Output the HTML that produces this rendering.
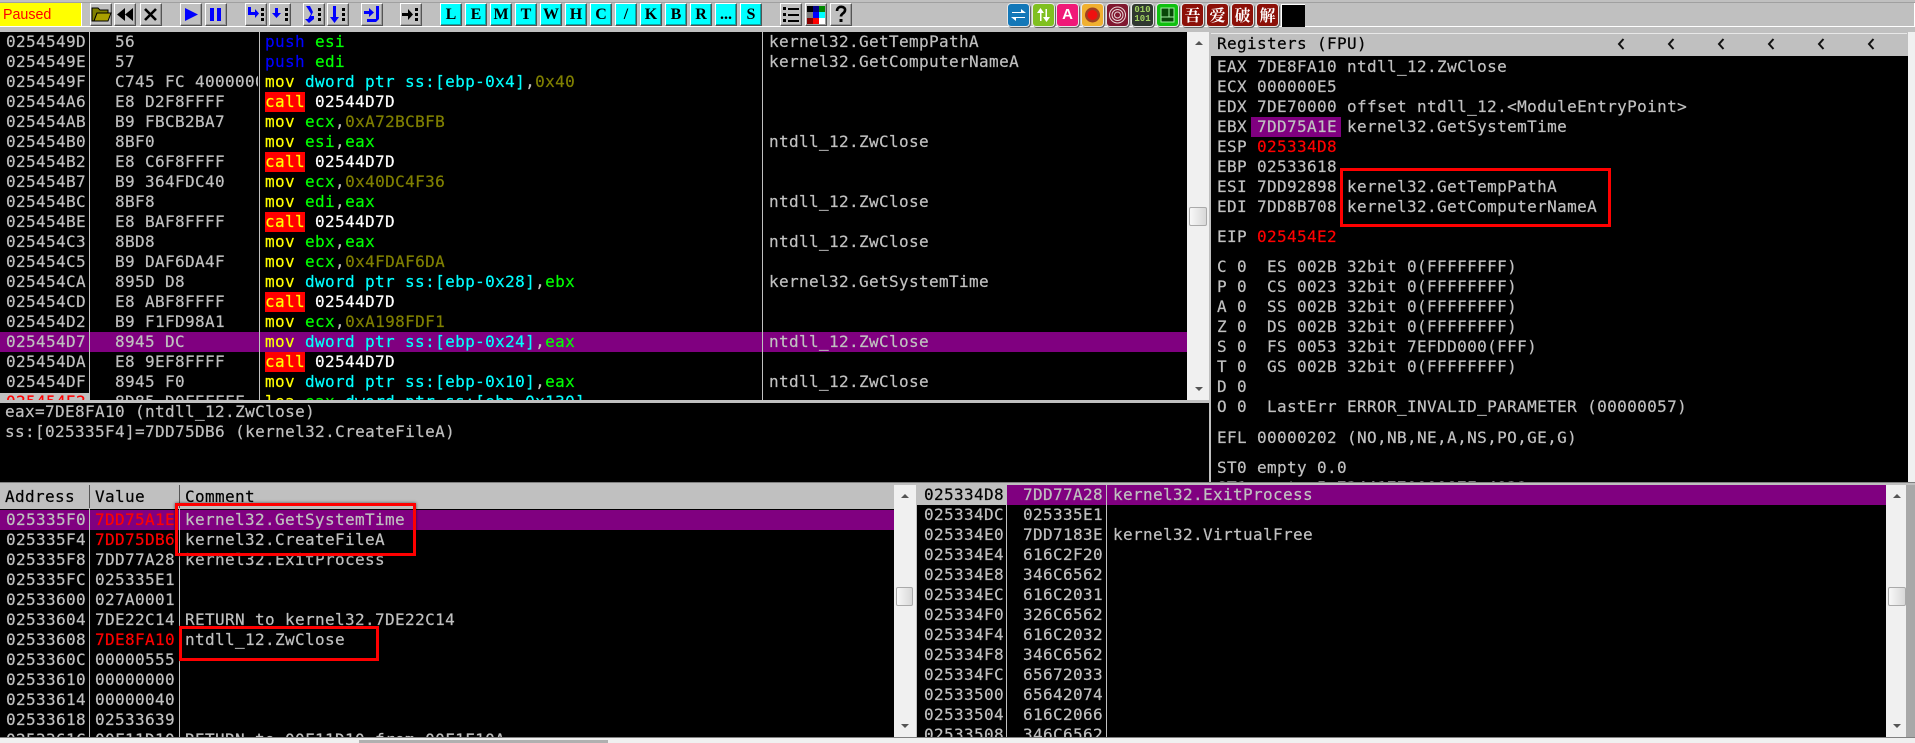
<!DOCTYPE html>
<html><head><meta charset="utf-8"><title>OllyDbg</title>
<style>
html,body{margin:0;padding:0;background:#c0c0c0}
#r{position:relative;width:1915px;height:743px;overflow:hidden;background:#c0c0c0;font-family:"DejaVu Sans Mono","Liberation Mono",monospace;filter:blur(.35px)}
.a{position:absolute}
pre{position:absolute;margin:0;font:16px/20px "DejaVu Sans Mono","Liberation Mono",monospace;letter-spacing:.37px;color:#c0c0c0;white-space:pre;-webkit-text-stroke:.2px}
.k{position:absolute;background:#000;overflow:hidden}
.b{position:absolute;top:3px;width:22px;height:23px;box-sizing:border-box;background:#c0c0c0;border:1px solid;border-color:#fff #555 #555 #fff;box-shadow:inset -1px -1px 0 #999}
.b svg{position:absolute;left:-1px;top:-1px;width:22px;height:23px}
.c{background:#0ff;text-align:center;font:bold 16px/21px "Liberation Serif",serif;color:#000;box-shadow:inset -1px -1px 0 #0aa}
.h{position:absolute;top:4px;width:21px;height:22px;border-radius:3px;box-shadow:0 0 0 1px #e8e8e8,1px 1px 0 1px #666;text-align:center;color:#fff}
.z{background:#8c1008;font:bold 16px/21px "Noto Serif CJK SC","Noto Sans CJK SC",serif}
.y{color:#ff0}.g{color:#0f0}.u{color:#00f}.n{color:#0ff}.o{color:#808000}.w{color:#fff}
.r{display:inline-block;background:#f00;color:#ff0;height:20px}
.e{color:#f00}
.p{position:absolute;background:#800080}
.v{position:absolute;width:1px;background:#c0c0c0}
.s{position:absolute;background:#f0f0f0}
.t{position:absolute;box-sizing:border-box;background:linear-gradient(90deg,#f8f8f8,#d8d8d8);border:1px solid #aaa;border-radius:2px;height:19px}
.f{position:absolute;width:0;height:0;border-left:4px solid transparent;border-right:4px solid transparent}
.x{position:absolute;box-sizing:border-box;border:3px solid #f00;box-shadow:0 0 3px rgba(0,0,0,.6)}
.q{position:absolute;top:38px;width:8px;height:12px}
</style></head><body><div id="r">

<!-- toolbar -->
<div class="a" style="left:0;top:2px;width:1915px;height:1px;background:#a0a0a0"></div>
<div class="a" style="left:0;top:26px;width:1915px;height:1px;background:#fff"></div>
<div class="a" style="left:0;top:3px;width:81px;height:23px;background:#ff0;border-right:1px solid #fff;color:#f00;font:15px/23px 'Liberation Sans',sans-serif"><span style="position:absolute;left:3px;top:0;transform:scaleX(.95);transform-origin:left">Paused</span></div>
<div class="a" style="left:1914px;top:3px;width:1px;height:24px;background:#fff"></div>

<div class="b" style="left:90px"><svg viewBox="0 0 22 23"><path d="M2 5h6l2 2h8v3H7L4 18H2z" fill="#808000" stroke="#000"/><path d="M7 10h14l-3 8H4z" fill="#aaa000" stroke="#000"/></svg></div>
<div class="b" style="left:114px"><svg viewBox="0 0 22 23"><path d="M11 5v13L3 11.500zM19 5v13l-8-6.500z" fill="#000"/></svg></div>
<div class="b" style="left:140px"><svg viewBox="0 0 22 23"><path d="M5 6l11 11M16 6L5 17" stroke="#000" stroke-width="2.600" fill="none"/></svg></div>
<div class="b" style="left:180px"><svg viewBox="0 0 22 23"><path d="M5 5l13 6.500L5 18z" fill="#00f"/></svg></div>
<div class="b" style="left:205px"><svg viewBox="0 0 22 23"><path d="M5 5h4v13H5zM12 5h4v13h-4z" fill="#00f"/></svg></div>
<div class="b" style="left:245px"><svg viewBox="0 0 22 23"><path d="M3 4h3v5h4V6l4 4.500-4 4.500v-3H3z" fill="#00f"/><path d="M16 5h3v3h-3zM16 10h3v3h-3zM16 15h3v3h-3z" fill="#000"/></svg></div>
<div class="b" style="left:269px"><svg viewBox="0 0 22 23"><path d="M6 5h3v5h3l-4.500 5L3 10h3z" fill="#00f"/><path d="M16 5h3v3h-3zM16 10h3v3h-3zM16 15h3v3h-3z" fill="#000"/></svg></div>
<div class="b" style="left:303px"><svg viewBox="0 0 22 23"><path d="M3 3l4 0 3 6-2 4h3v3l-5 4-4-4h3l3-5-3-5z" fill="#00f"/><path d="M15 5h3v3h-3zM15 10h3v3h-3zM15 15h3v3h-3z" fill="#000"/></svg></div>
<div class="b" style="left:327px"><svg viewBox="0 0 22 23"><path d="M6 3h3v11h3l-4.500 6L3 14h3z" fill="#00f"/><path d="M15 5h3v3h-3zM15 10h3v3h-3zM15 15h3v3h-3z" fill="#000"/></svg></div>
<div class="b" style="left:361px"><svg viewBox="0 0 22 23"><path d="M3 8h5V5l5 4.500L8 14v-3H3z" fill="#00f"/><path d="M15 3h3v13l-3 3H6v-3h9z" fill="#00f"/></svg></div>
<div class="b" style="left:400px"><svg viewBox="0 0 22 23"><path d="M2 10h6V6l5 5.500L8 17v-4H2z" fill="#000"/><path d="M15 5h3v3h-3zM15 10h3v3h-3zM15 15h3v3h-3z" fill="#000"/></svg></div>

<div class="b c" style="left:440px">L</div><div class="b c" style="left:465px">E</div><div class="b c" style="left:490px">M</div><div class="b c" style="left:515px">T</div><div class="b c" style="left:540px">W</div><div class="b c" style="left:565px">H</div><div class="b c" style="left:590px">C</div><div class="b c" style="left:615px">/</div><div class="b c" style="left:640px">K</div><div class="b c" style="left:665px">B</div><div class="b c" style="left:690px">R</div><div class="b c" style="left:715px">...</div><div class="b c" style="left:740px">S</div>

<div class="b" style="left:780px"><svg viewBox="0 0 22 23"><path d="M3 4h3v3H3zM3 10h3v3H3zM3 16h3v3H3z" fill="#000"/><path d="M8 5h11v2H8zM8 11h11v2H8zM8 17h11v2H8z" fill="#000"/></svg></div>
<div class="b" style="left:805px"><svg viewBox="0 0 22 23"><rect x="2" y="3" width="6" height="6" fill="#000"/><rect x="8" y="3" width="6" height="6" fill="#008"/><rect x="14" y="3" width="6" height="6" fill="#080"/><rect x="2" y="9" width="6" height="6" fill="#808080"/><rect x="8" y="9" width="6" height="6" fill="#00f"/><rect x="14" y="9" width="6" height="6" fill="#0ff"/><rect x="2" y="15" width="6" height="6" fill="#800"/><rect x="8" y="15" width="6" height="6" fill="#f00"/><rect x="14" y="15" width="6" height="6" fill="#fff"/></svg></div>
<div class="b" style="left:830px"><svg viewBox="0 0 22 23"><path d="M7 8c0-6 9-5 8-.500-.500 3-4 3-4 6" stroke="#000" stroke-width="2.600" fill="none"/><rect x="9.500" y="16" width="3" height="3" fill="#000"/></svg></div>

<div class="h" style="left:1008px;background:#1478b8"><svg width="21" height="22" viewBox="0 0 21 22"><path d="M4 8h9V5l5 4h-14zM17 14H8v3l-5-4h14z" fill="#fff"/></svg></div>
<div class="h" style="left:1033px;background:#80c020"><svg width="21" height="22" viewBox="0 0 21 22"><path d="M7 17V9H4l3.500-5L11 9H8.500v8zM14 5v8h3l-3.500 5L10 13h2.500V5z" fill="#fff"/></svg></div>
<div class="h" style="left:1057px;background:#f01878;font:bold 15px/22px 'Liberation Sans',sans-serif">A</div>
<div class="h" style="left:1082px;background:#f0b030"><svg width="21" height="22" viewBox="0 0 21 22"><circle cx="10.500" cy="11" r="7.500" fill="#a04020"/><circle cx="10.500" cy="11" r="5" fill="#f01010"/></svg></div>
<div class="h" style="left:1107px;background:#801830"><svg width="21" height="22" viewBox="0 0 21 22" fill="none" stroke="#e8d8d8"><circle cx="10.500" cy="11" r="8"/><circle cx="10.500" cy="11" r="5.500"/><circle cx="10.500" cy="11" r="3"/></svg></div>
<div class="h" style="left:1132px;background:#303830;color:#a0d060;font:bold 9px/9px 'Liberation Mono',monospace;padding-top:2px;box-sizing:border-box">010<br>101</div>
<div class="h" style="left:1157px;background:#10c010"><svg width="21" height="22" viewBox="0 0 21 22"><rect x="4" y="4" width="13" height="14" fill="#084808" stroke="#a0f0a0"/><path d="M12 4v9M4 13h13" stroke="#a0f0a0"/></svg></div>
<div class="h z" style="left:1182px">吾</div><div class="h z" style="left:1207px">爱</div><div class="h z" style="left:1232px">破</div><div class="h z" style="left:1257px">解</div>
<div class="a" style="left:1281px;top:4px;width:23px;height:22px;background:#000;border-left:1px solid #fff;border-top:1px solid #fff"></div>

<!-- disassembly -->
<div class="k" style="left:0;top:32px;width:1187px;height:368px">
<div class="a" style="left:0;top:361px;width:89px;height:7px;background:#c0c0c0"></div>
<div class="p" style="left:0;top:300px;width:1187px;height:20px"></div>
<pre style="left:6px;top:0">0254549D
0254549E
0254549F
025454A6
025454AB
025454B0
025454B2
025454B7
025454BC
025454BE
025454C3
025454C5
025454CA
025454CD
025454D2
025454D7
025454DA
025454DF
<span class="e">025454E2</span></pre>
<pre style="left:115px;top:0;width:143px;overflow:hidden">56
57
C745 FC 40000000
E8 D2F8FFFF
B9 FBCB2BA7
8BF0
E8 C6F8FFFF
B9 364FDC40
8BF8
E8 BAF8FFFF
8BD8
B9 DAF6DA4F
895D D8
E8 ABF8FFFF
B9 F1FD98A1
8945 DC
E8 9EF8FFFF
8945 F0
8D85 D0FEFFFF</pre>
<pre style="left:265px;top:0"><span class="u">push</span> <span class="g">esi</span>
<span class="u">push</span> <span class="g">edi</span>
<span class="y">mov</span> <span class="n">dword ptr ss:[ebp-0x4]</span>,<span class="o">0x40</span>
<span class="r">call</span> <span class="w">02544D7D</span>
<span class="y">mov</span> <span class="g">ecx</span>,<span class="o">0xA72BCBFB</span>
<span class="y">mov</span> <span class="g">esi</span>,<span class="g">eax</span>
<span class="r">call</span> <span class="w">02544D7D</span>
<span class="y">mov</span> <span class="g">ecx</span>,<span class="o">0x40DC4F36</span>
<span class="y">mov</span> <span class="g">edi</span>,<span class="g">eax</span>
<span class="r">call</span> <span class="w">02544D7D</span>
<span class="y">mov</span> <span class="g">ebx</span>,<span class="g">eax</span>
<span class="y">mov</span> <span class="g">ecx</span>,<span class="o">0x4FDAF6DA</span>
<span class="y">mov</span> <span class="n">dword ptr ss:[ebp-0x28]</span>,<span class="g">ebx</span>
<span class="r">call</span> <span class="w">02544D7D</span>
<span class="y">mov</span> <span class="g">ecx</span>,<span class="o">0xA198FDF1</span>
<span class="y">mov</span> <span class="n">dword ptr ss:[ebp-0x24]</span>,<span class="g">eax</span>
<span class="r">call</span> <span class="w">02544D7D</span>
<span class="y">mov</span> <span class="n">dword ptr ss:[ebp-0x10]</span>,<span class="g">eax</span>
<span class="y">lea</span> <span class="g">eax</span>,<span class="n">dword ptr ss:[ebp-0x130]</span></pre>
<pre style="left:769px;top:0">kernel32.GetTempPathA
kernel32.GetComputerNameA



ntdll_12.ZwClose


ntdll_12.ZwClose

ntdll_12.ZwClose

kernel32.GetSystemTime


ntdll_12.ZwClose

ntdll_12.ZwClose</pre>
<div class="v" style="left:89px;top:0;height:368px"></div>
<div class="v" style="left:259px;top:0;height:368px"></div>
<div class="v" style="left:762px;top:0;height:368px"></div>
</div>
<div class="s" style="left:1187px;top:32px;width:22px;height:368px"></div>
<div class="t" style="left:1189px;top:207px;width:18px"></div>
<div class="f" style="left:1195px;top:41px;border-bottom:4px solid #555"></div>
<div class="f" style="left:1195px;top:387px;border-top:4px solid #555"></div>

<!-- info pane -->
<div class="k" style="left:0;top:403px;width:1209px;height:79px">
<pre style="left:5px;top:-1px">eax=7DE8FA10 (ntdll_12.ZwClose)
ss:[025335F4]=7DD75DB6 (kernel32.CreateFileA)</pre>
</div>

<!-- registers -->
<div class="a" style="left:1211px;top:33px;width:696px;height:22px;background:#c0c0c0;border-top:1px solid #e8e8e8"></div>
<pre style="left:1217px;top:34px;color:#000">Registers (FPU)</pre>
<svg class="q" style="left:1617px" viewBox="0 0 8 12"><path d="M6.500 1L2 6l4.500 5" fill="none" stroke="#111" stroke-width="2"/></svg>
<svg class="q" style="left:1667px" viewBox="0 0 8 12"><path d="M6.500 1L2 6l4.500 5" fill="none" stroke="#111" stroke-width="2"/></svg>
<svg class="q" style="left:1717px" viewBox="0 0 8 12"><path d="M6.500 1L2 6l4.500 5" fill="none" stroke="#111" stroke-width="2"/></svg>
<svg class="q" style="left:1767px" viewBox="0 0 8 12"><path d="M6.500 1L2 6l4.500 5" fill="none" stroke="#111" stroke-width="2"/></svg>
<svg class="q" style="left:1817px" viewBox="0 0 8 12"><path d="M6.500 1L2 6l4.500 5" fill="none" stroke="#111" stroke-width="2"/></svg>
<svg class="q" style="left:1867px" viewBox="0 0 8 12"><path d="M6.500 1L2 6l4.500 5" fill="none" stroke="#111" stroke-width="2"/></svg>
<div class="k" style="left:1211px;top:56px;width:697px;height:426px">
<div class="p" style="left:40px;top:61px;width:90px;height:20px"></div>
<pre style="left:6px;top:1px">EAX 7DE8FA10 ntdll_12.ZwClose
ECX 000000E5
EDX 7DE70000 offset ntdll_12.&lt;ModuleEntryPoint&gt;
EBX 7DD75A1E kernel32.GetSystemTime
ESP <span class="e">025334D8</span>
EBP 02533618
ESI 7DD92898 kernel32.GetTempPathA
EDI 7DD8B708 kernel32.GetComputerNameA</pre>
<pre style="left:6px;top:171px">EIP <span class="e">025454E2</span></pre>
<pre style="left:6px;top:201px">C 0  ES 002B 32bit 0(FFFFFFFF)
P 0  CS 0023 32bit 0(FFFFFFFF)
A 0  SS 002B 32bit 0(FFFFFFFF)
Z 0  DS 002B 32bit 0(FFFFFFFF)
S 0  FS 0053 32bit 7EFDD000(FFF)
T 0  GS 002B 32bit 0(FFFFFFFF)
D 0
O 0  LastErr ERROR_INVALID_PARAMETER (00000057)</pre>
<pre style="left:6px;top:372px">EFL 00000202 (NO,NB,NE,A,NS,PO,GE,G)</pre>
<pre style="left:6px;top:402px">ST0 empty 0.0
ST1 empty 5.7344177000087E+4932</pre>
</div>
<div class="a" style="left:1908px;top:32px;width:7px;height:451px;background:#f0f0f0"></div>

<!-- dump -->
<div class="a" style="left:0;top:482px;width:1915px;height:1px;background:#808080"></div>
<pre style="left:5px;top:487px;color:#000">Address</pre>
<pre style="left:95px;top:487px;color:#000">Value</pre>
<pre style="left:185px;top:487px;color:#000">Comment</pre>
<div class="a" style="left:89px;top:485px;width:1px;height:23px;background:#555"></div>
<div class="a" style="left:179px;top:485px;width:1px;height:23px;background:#555"></div>
<div class="k" style="left:0;top:509px;width:894px;height:228px">
<div class="p" style="left:0;top:1px;width:894px;height:20px"></div>
<pre style="left:6px;top:1px">025335F0
025335F4
025335F8
025335FC
02533600
02533604
02533608
0253360C
02533610
02533614
02533618
0253361C</pre>
<pre style="left:95px;top:1px"><span class="e">7DD75A1E</span>
<span class="e">7DD75DB6</span>
7DD77A28
025335E1
027A0001
7DE22C14
<span class="e">7DE8FA10</span>
00000555
00000000
00000040
02533639
00F11D10</pre>
<pre style="left:185px;top:1px">kernel32.GetSystemTime
kernel32.CreateFileA
kernel32.ExitProcess


RETURN to kernel32.7DE22C14
ntdll_12.ZwClose




RETURN to 00F11D10 from 00F1F10A</pre>
<div class="v" style="left:89px;top:0;height:228px"></div>
<div class="v" style="left:179px;top:0;height:228px"></div>
</div>
<div class="s" style="left:894px;top:485px;width:22px;height:252px"></div>
<div class="t" style="left:896px;top:587px;width:17px"></div>
<div class="f" style="left:901px;top:494px;border-bottom:4px solid #555"></div>
<div class="f" style="left:901px;top:724px;border-top:4px solid #555"></div>

<!-- stack -->
<div class="k" style="left:917px;top:485px;width:969px;height:252px">
<div class="a" style="left:0;top:0;width:89px;height:20px;background:#c0c0c0"></div>
<div class="p" style="left:90px;top:0;width:879px;height:20px"></div>
<pre style="left:7px;top:0"><span style="color:#000">025334D8</span>
025334DC
025334E0
025334E4
025334E8
025334EC
025334F0
025334F4
025334F8
025334FC
02533500
02533504
02533508</pre>
<pre style="left:106px;top:0">7DD77A28
025335E1
7DD7183E
616C2F20
346C6562
616C2031
326C6562
616C2032
346C6562
65672033
65642074
616C2066
346C6562</pre>
<pre style="left:196px;top:0">kernel32.ExitProcess

kernel32.VirtualFree</pre>
<div class="v" style="left:89px;top:0;height:252px"></div>
<div class="v" style="left:189px;top:0;height:252px"></div>
</div>
<div class="s" style="left:1886px;top:485px;width:20px;height:252px"></div>
<div class="t" style="left:1888px;top:587px;width:18px"></div>
<div class="f" style="left:1893px;top:494px;border-bottom:4px solid #555"></div>
<div class="f" style="left:1893px;top:724px;border-top:4px solid #555"></div>
<div class="a" style="left:1906px;top:485px;width:9px;height:252px;background:#a8a8a8"></div>

<!-- bottom bar -->
<div class="a" style="left:0;top:737px;width:1915px;height:1px;background:#808080"></div>
<div class="a" style="left:0;top:738px;width:1915px;height:5px;background:#f0f0f0"></div>
<div class="a" style="left:359px;top:740px;width:249px;height:3px;background:#b0b0b0"></div>

<!-- red annotation boxes -->
<div class="x" style="left:1340px;top:168px;width:271px;height:59px"></div>
<div class="x" style="left:175px;top:503px;width:241px;height:53px"></div>
<div class="x" style="left:179px;top:626px;width:200px;height:35px"></div>
</div></body></html>
